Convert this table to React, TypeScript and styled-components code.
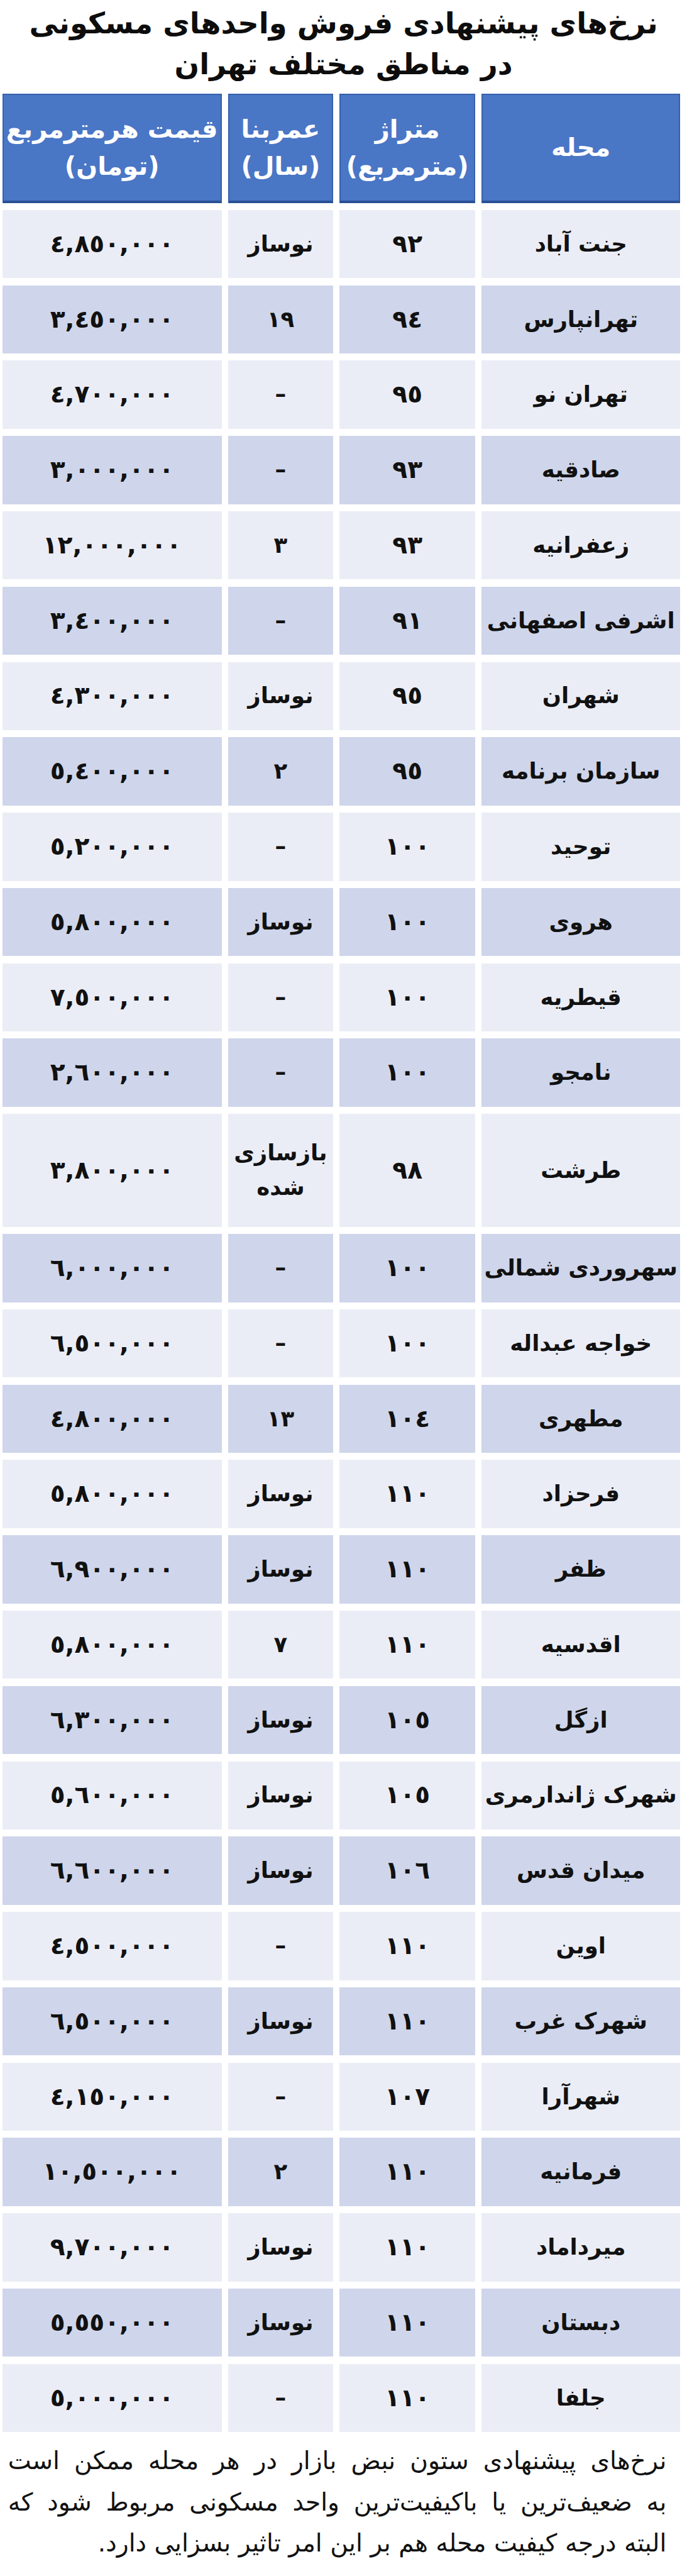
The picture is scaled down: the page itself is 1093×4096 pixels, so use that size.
import React from 'react';
import styled, { createGlobalStyle } from 'styled-components';

// reference was drawn at 1200px wide, the window is 1093
const S = 0.911;
const px = (n: number) => `${(n * S).toFixed(2)}px`;

const FONT = `"DejaVu Sans", "Noto Sans", sans-serif`;

const GlobalStyle = createGlobalStyle`
  html, body {
    margin: 0;
    padding: 0;
    background: #ffffff;
  }
  body {
    font-family: ${FONT};
    color: #111111;
  }
`;

const Page = styled.div`
  width: ${px(1200)};
  direction: rtl;
  background: #ffffff;
`;

const Title = styled.h1`
  margin: 0;
  padding-top: ${px(6)};
  font-family: ${FONT};
  font-size: ${px(51)};
  font-weight: 700;
  line-height: ${px(71)};
  text-align: center;
  white-space: nowrap;
  color: #0d0d0d;
`;

const Table = styled.div`
  display: flex;
  flex-direction: column;
  gap: ${px(12.5)};
  margin: ${px(15)} ${px(12)} 0 ${px(4)};
`;

const Row = styled.div<{ $tall?: boolean; $head?: boolean }>`
  display: grid;
  grid-template-columns: ${px(347)} ${px(237)} ${px(184)} ${px(383)};
  column-gap: ${px(11)};
  height: ${p => (p.$head ? px(191) : p.$tall ? px(197) : px(119))};
`;

const HeadCell = styled.div`
  display: flex;
  align-items: center;
  justify-content: center;
  flex-direction: column;
  box-sizing: border-box;
  background: #4a76c6;
  border: ${px(3)} solid #3660ab;
  border-bottom: ${px(5)} solid #2a4f94;
  color: #ffffff;
  font-size: ${px(44)};
  font-weight: 700;
  line-height: ${px(64)};
  text-align: center;
  white-space: nowrap;
`;

const Cell = styled.div<{ $shade: boolean }>`
  display: flex;
  align-items: center;
  justify-content: center;
  flex-direction: column;
  background: ${p => (p.$shade ? '#cfd6eb' : '#ebedf6')};
  font-size: ${px(39)};
  font-weight: 700;
  line-height: ${px(60)};
  text-align: center;
  white-space: nowrap;
  color: #111111;
`;

const Number = styled.span`
  direction: ltr;
  unicode-bidi: isolate;
  font-size: ${px(43)};
`;

const Footnote = styled.div`
  margin-top: ${px(14)};
  padding: 0 ${px(36)} 0 ${px(14)};
  font-family: ${FONT};
  font-size: ${px(43)};
  line-height: ${px(72)};
  color: #111111;
`;

const NoteLine = styled.div<{ $fill?: boolean }>`
  white-space: nowrap;
  text-align: ${p => (p.$fill ? 'justify' : 'right')};
  text-align-last: ${p => (p.$fill ? 'justify' : 'right')};
`;

const fa = (s: string) => s.replace(/[0-9]/g, d => String.fromCharCode(0x0660 + +d));

type Item = { name: string; area: string; age: string | string[]; price: string };

const rows: Item[] = [
  { name: 'جنت آباد', area: '92', age: 'نوساز', price: '4,850,000' },
  { name: 'تهرانپارس', area: '94', age: '19', price: '3,450,000' },
  { name: 'تهران نو', area: '95', age: '–', price: '4,700,000' },
  { name: 'صادقیه', area: '93', age: '–', price: '3,000,000' },
  { name: 'زعفرانیه', area: '93', age: '3', price: '12,000,000' },
  { name: 'اشرفی اصفهانی', area: '91', age: '–', price: '3,400,000' },
  { name: 'شهران', area: '95', age: 'نوساز', price: '4,300,000' },
  { name: 'سازمان برنامه', area: '95', age: '2', price: '5,400,000' },
  { name: 'توحید', area: '100', age: '–', price: '5,200,000' },
  { name: 'هروی', area: '100', age: 'نوساز', price: '5,800,000' },
  { name: 'قیطریه', area: '100', age: '–', price: '7,500,000' },
  { name: 'نامجو', area: '100', age: '–', price: '2,600,000' },
  { name: 'طرشت', area: '98', age: ['بازسازی', 'شده'], price: '3,800,000' },
  { name: 'سهروردی شمالی', area: '100', age: '–', price: '6,000,000' },
  { name: 'خواجه عبداله', area: '100', age: '–', price: '6,500,000' },
  { name: 'مطهری', area: '104', age: '13', price: '4,800,000' },
  { name: 'فرحزاد', area: '110', age: 'نوساز', price: '5,800,000' },
  { name: 'ظفر', area: '110', age: 'نوساز', price: '6,900,000' },
  { name: 'اقدسیه', area: '110', age: '7', price: '5,800,000' },
  { name: 'ازگل', area: '105', age: 'نوساز', price: '6,300,000' },
  { name: 'شهرک ژاندارمری', area: '105', age: 'نوساز', price: '5,600,000' },
  { name: 'میدان قدس', area: '106', age: 'نوساز', price: '6,600,000' },
  { name: 'اوین', area: '110', age: '–', price: '4,500,000' },
  { name: 'شهرک غرب', area: '110', age: 'نوساز', price: '6,500,000' },
  { name: 'شهرآرا', area: '107', age: '–', price: '4,150,000' },
  { name: 'فرمانیه', area: '110', age: '2', price: '10,500,000' },
  { name: 'میرداماد', area: '110', age: 'نوساز', price: '9,700,000' },
  { name: 'دبستان', area: '110', age: 'نوساز', price: '5,550,000' },
  { name: 'جلفا', area: '110', age: '–', price: '5,000,000' },
];

const App: React.FC = () => {
  return (
    <Page lang="fa">
      <GlobalStyle />
      <Title>
        نرخ‌های پیشنهادی فروش واحدهای مسکونی
        <br />
        در مناطق مختلف تهران
      </Title>

      <Table>
        <Row $head>
          <HeadCell>محله</HeadCell>
          <HeadCell>
            <span>متراژ</span>
            <span>(مترمربع)</span>
          </HeadCell>
          <HeadCell>
            <span>عمربنا</span>
            <span>(سال)</span>
          </HeadCell>
          <HeadCell>
            <span>قیمت هرمترمربع</span>
            <span>(تومان)</span>
          </HeadCell>
        </Row>

        {rows.map((r, i) => {
          const shade = i % 2 === 1;
          const tall = Array.isArray(r.age);
          return (
            <Row key={r.name} $tall={tall}>
              <Cell $shade={shade}>{r.name}</Cell>
              <Cell $shade={shade}>
                <Number>{fa(r.area)}</Number>
              </Cell>
              <Cell $shade={shade}>
                {Array.isArray(r.age)
                  ? r.age.map(a => <span key={a}>{a}</span>)
                  : fa(r.age)}
              </Cell>
              <Cell $shade={shade}>
                <Number>{fa(r.price)}</Number>
              </Cell>
            </Row>
          );
        })}
      </Table>

      <Footnote>
        <NoteLine $fill>نرخ‌های پیشنهادی ستون نبض بازار در هر محله ممکن است</NoteLine>
        <NoteLine $fill>به ضعیف‌ترین یا باکیفیت‌ترین واحد مسکونی مربوط شود که</NoteLine>
        <NoteLine>البته درجه کیفیت محله هم بر این امر تاثیر بسزایی دارد.</NoteLine>
      </Footnote>
    </Page>
  );
};

export default App;
